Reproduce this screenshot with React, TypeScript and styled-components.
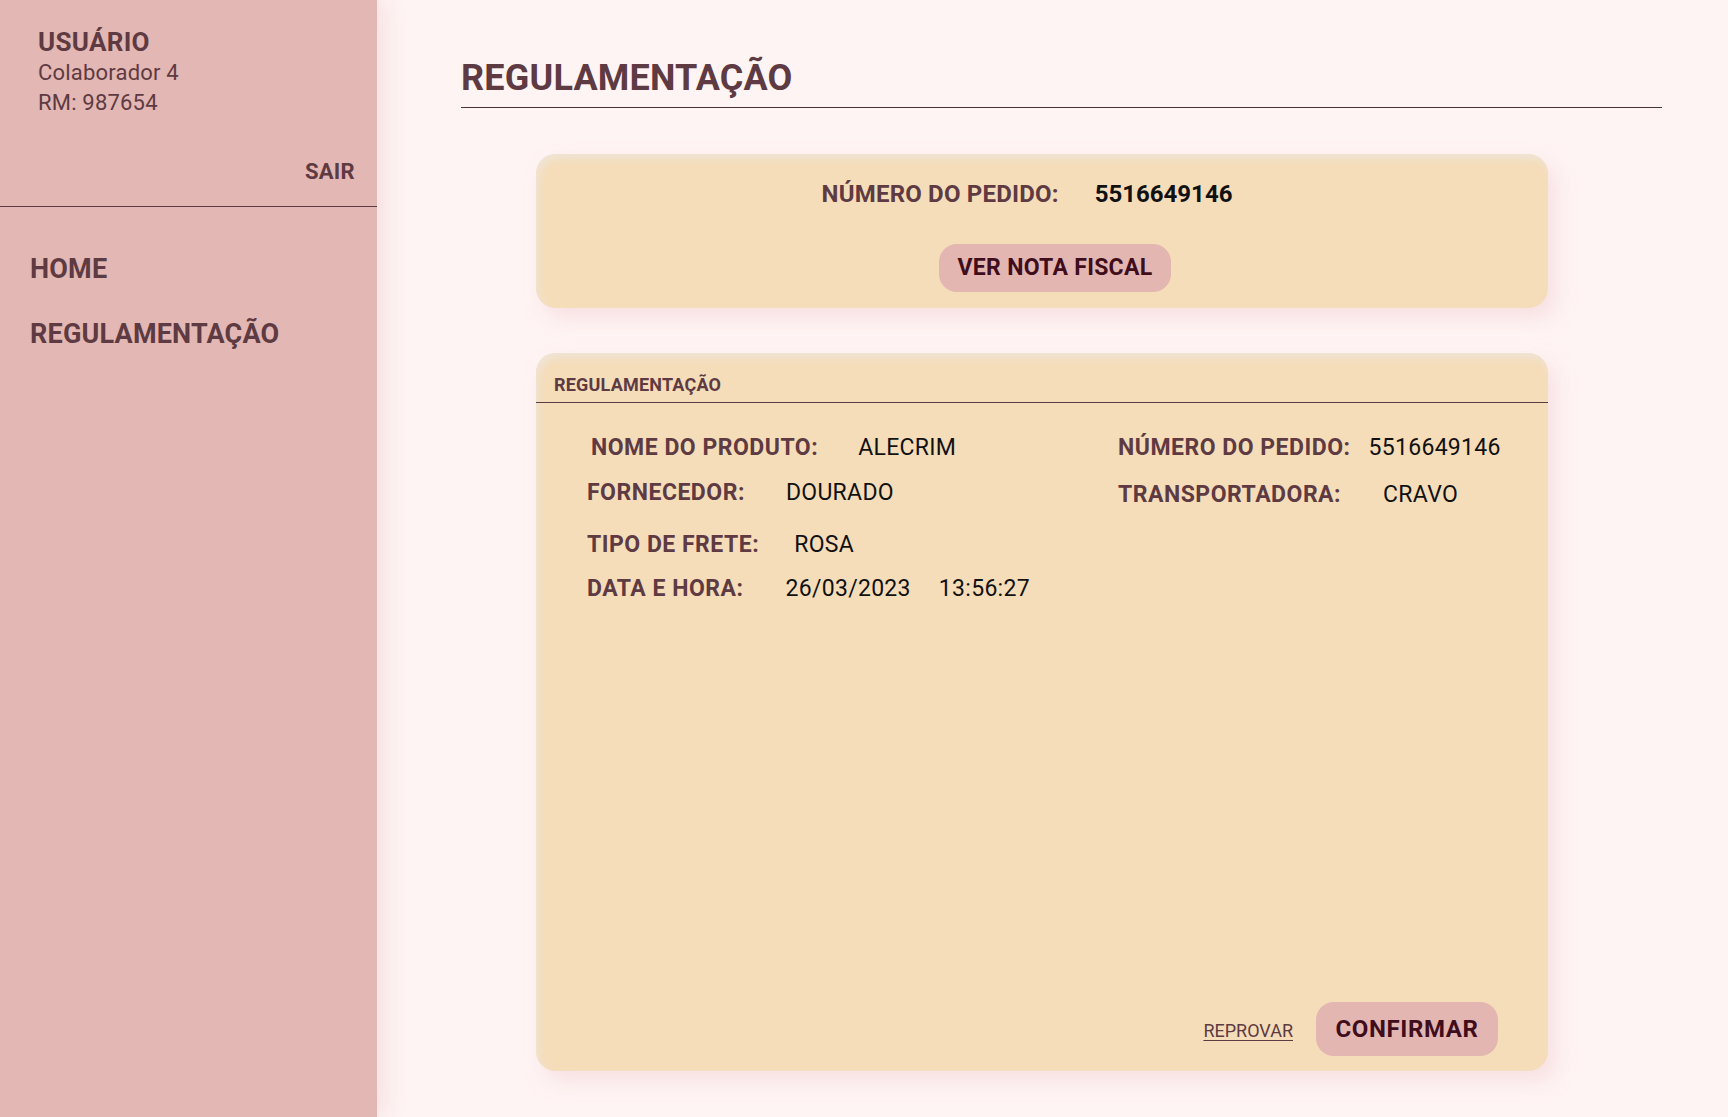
import React from "react";
import styled, { createGlobalStyle } from "styled-components";

const GlobalStyle = createGlobalStyle`
  html, body {
    margin: 0;
    padding: 0;
    background: #fef4f3;
    font-family: Roboto, "Noto Sans", "Liberation Sans", sans-serif;
  }
  * { box-sizing: border-box; }
`;

const Layout = styled.div`
  display: flex;
  min-height: 100vh;
  background: #fef4f3;
`;

const Sidebar = styled.aside`
  width: 377px;
  flex: 0 0 377px;
  min-height: 100vh;
  background: #e3b7b3;
  box-shadow: 6px 0 22px rgba(236, 196, 198, 0.45);
  display: flex;
  flex-direction: column;
  color: #5e3a42;
  position: relative;
  z-index: 1;
`;

const UserBlock = styled.div`
  padding: 27px 22px 21px 38px;
  border-bottom: 1px solid #5e3a42;
  display: flex;
  flex-direction: column;
`;

const UserTitle = styled.div`
  font-size: 26px;
  font-weight: 700;
  line-height: 1.2;
  letter-spacing: 0.3px;
`;

const UserLine = styled.div<{ $top: number }>`
  font-size: 22px;
  font-weight: 400;
  line-height: 1.2;
  letter-spacing: 0.2px;
  margin-top: ${(p) => p.$top}px;
`;

const Logout = styled.button`
  align-self: flex-end;
  margin-top: 43px;
  padding: 0;
  background: none;
  border: none;
  font-family: inherit;
  font-size: 22px;
  font-weight: 700;
  line-height: 1.2;
  color: #5e3a42;
  letter-spacing: 0.3px;
  cursor: pointer;
`;

const Nav = styled.nav`
  display: flex;
  flex-direction: column;
  gap: 32px;
  padding: 46px 0 0 30px;
`;

const NavItem = styled.a`
  font-size: 27px;
  font-weight: 700;
  line-height: 1.2;
  color: #5e3a42;
  letter-spacing: 0.2px;
  text-decoration: none;
  cursor: pointer;
`;

const Main = styled.main`
  flex: 1;
  padding: 56px 66px 40px 84px;
  display: flex;
  flex-direction: column;
`;

const PageTitle = styled.h1`
  margin: 0;
  padding-bottom: 6px;
  border-bottom: 1px solid #4f3238;
  font-size: 36px;
  font-weight: 700;
  line-height: 1.25;
  letter-spacing: 0.2px;
  color: #5e3a42;
`;

const Card = styled.section<{ $top: number; $height?: number }>`
  width: 1012px;
  margin-left: 75px;
  margin-top: ${(p) => p.$top}px;
  ${(p) => (p.$height ? `height: ${p.$height}px;` : "")}
  background: #f5ddba;
  border-radius: 20px;
  box-shadow: inset 3px 5px 7px rgba(238, 228, 214, 0.95),
    8px 10px 18px rgba(244, 210, 214, 0.55);
  display: flex;
  flex-direction: column;
`;

const OrderCard = styled(Card)`
  padding: 26px 0 16px;
  align-items: center;
`;

const OrderRow = styled.div`
  display: flex;
  align-items: baseline;
  gap: 36px;
  padding-right: 30px;
  line-height: 1.2;
`;

const OrderLabel = styled.span`
  font-size: 24px;
  font-weight: 700;
  color: #5e3a42;
  letter-spacing: 0.2px;
`;

const OrderValue = styled.span`
  font-size: 24px;
  font-weight: 700;
  color: #111;
`;

const PillButton = styled.button<{ $width: number; $height: number }>`
  width: ${(p) => p.$width}px;
  height: ${(p) => p.$height}px;
  border: none;
  border-radius: 18px;
  background: #e3b6b2;
  color: #3f0d1b;
  font-family: inherit;
  font-size: 23px;
  font-weight: 700;
  letter-spacing: 0.3px;
  cursor: pointer;
  display: flex;
  align-items: center;
  justify-content: center;
  padding: 0;
`;

const InvoiceButton = styled(PillButton)`
  margin-top: 35px;
  margin-left: 26px;
`;

const CardHeader = styled.header`
  padding: 21px 18px 7px;
  border-bottom: 1px solid #5e3a42;
  font-size: 18px;
  font-weight: 700;
  line-height: 1.2;
  letter-spacing: 0.2px;
  color: #5e3a42;
`;

const CardBody = styled.div`
  flex: 1;
  display: grid;
  grid-template-columns: 531px 1fr;
  align-content: start;
  padding: 31px 0 0 51px;
`;

const FieldColumn = styled.div<{ $gap: number }>`
  display: flex;
  flex-direction: column;
  gap: ${(p) => p.$gap}px;
`;

const Field = styled.div<{ $gap: number; $indent?: number; $extra?: number }>`
  display: flex;
  align-items: baseline;
  gap: ${(p) => p.$gap}px;
  line-height: 1.2;
  padding-left: ${(p) => p.$indent ?? 0}px;
  margin-top: ${(p) => p.$extra ?? 0}px;
`;

const FieldLabel = styled.span`
  font-size: 23px;
  font-weight: 700;
  color: #5e3a42;
  letter-spacing: 0.5px;
`;

const FieldValue = styled.span`
  font-size: 23px;
  font-weight: 400;
  color: #111;
  letter-spacing: 0.3px;
`;

const Actions = styled.footer`
  display: flex;
  justify-content: flex-end;
  align-items: center;
  gap: 23px;
  padding: 0 50px 15px 0;
`;

const RejectLink = styled.button`
  background: none;
  border: none;
  padding: 0;
  font-family: inherit;
  font-size: 18px;
  font-weight: 400;
  color: #5e3a42;
  text-decoration: underline;
  text-underline-offset: 3px;
  text-decoration-thickness: 1px;
  margin-top: 4px;
  cursor: pointer;
`;

const ConfirmButton = styled(PillButton)`
  font-size: 24px;
  letter-spacing: 0.6px;
`;

export default function App() {
  return (
    <>
      <GlobalStyle />
      <Layout>
        <Sidebar>
          <UserBlock>
            <UserTitle>USUÁRIO</UserTitle>
            <UserLine $top={2}>Colaborador 4</UserLine>
            <UserLine $top={3}>RM: 987654</UserLine>
            <Logout>SAIR</Logout>
          </UserBlock>
          <Nav>
            <NavItem>HOME</NavItem>
            <NavItem>REGULAMENTAÇÃO</NavItem>
          </Nav>
        </Sidebar>
        <Main>
          <PageTitle>REGULAMENTAÇÃO</PageTitle>
          <OrderCard $top={46}>
            <OrderRow>
              <OrderLabel>NÚMERO DO PEDIDO:</OrderLabel>
              <OrderValue>5516649146</OrderValue>
            </OrderRow>
            <InvoiceButton $width={232} $height={48}>
              VER NOTA FISCAL
            </InvoiceButton>
          </OrderCard>
          <Card $top={45} $height={718}>
            <CardHeader>REGULAMENTAÇÃO</CardHeader>
            <CardBody>
              <FieldColumn $gap={17}>
                <Field $gap={40} $indent={4}>
                  <FieldLabel>NOME DO PRODUTO:</FieldLabel>
                  <FieldValue>ALECRIM</FieldValue>
                </Field>
                <Field $gap={41}>
                  <FieldLabel>FORNECEDOR:</FieldLabel>
                  <FieldValue>DOURADO</FieldValue>
                </Field>
                <Field $gap={35} $extra={7}>
                  <FieldLabel>TIPO DE FRETE:</FieldLabel>
                  <FieldValue>ROSA</FieldValue>
                </Field>
                <Field $gap={42}>
                  <FieldLabel>DATA E HORA:</FieldLabel>
                  <Field $gap={28}>
                    <FieldValue>26/03/2023</FieldValue>
                    <FieldValue>13:56:27</FieldValue>
                  </Field>
                </Field>
              </FieldColumn>
              <FieldColumn $gap={19}>
                <Field $gap={18}>
                  <FieldLabel>NÚMERO DO PEDIDO:</FieldLabel>
                  <FieldValue>5516649146</FieldValue>
                </Field>
                <Field $gap={42}>
                  <FieldLabel>TRANSPORTADORA:</FieldLabel>
                  <FieldValue>CRAVO</FieldValue>
                </Field>
              </FieldColumn>
            </CardBody>
            <Actions>
              <RejectLink>REPROVAR</RejectLink>
              <ConfirmButton $width={182} $height={54}>
                CONFIRMAR
              </ConfirmButton>
            </Actions>
          </Card>
        </Main>
      </Layout>
    </>
  );
}
